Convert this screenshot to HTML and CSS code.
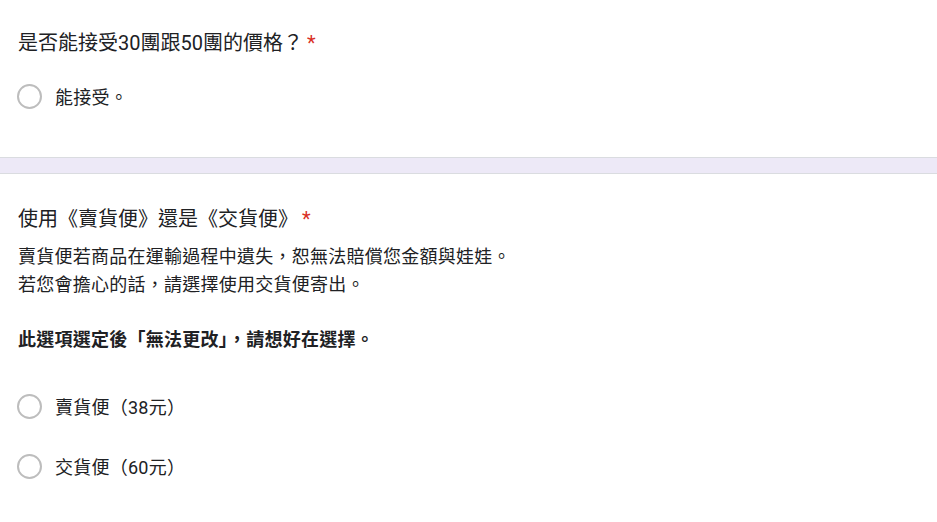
FILE: index.html
```html
<!DOCTYPE html>
<html lang="zh-Hant">
<head>
    <meta charset="UTF-8">
    <meta name="viewport" content="width=device-width, initial-scale=1.0">
    <title>表單</title>
    <link rel="stylesheet" href="styles.css">
</head>
<body>
    <div class="form">
        <!-- Soru 1 -->
        <div class="card card-top">
            <div class="q-title">是否能接受30團跟50團的價格？<span class="req">*</span></div>
            <div class="options">
                <label class="option">
                    <span class="radio"></span>
                    <span class="opt-text">能接受。</span>
                </label>
            </div>
        </div>

        <div class="gap"></div>

        <!-- Soru 2 -->
        <div class="card">
            <div class="q-title">使用《賣貨便》還是《交貨便》<span class="req">*</span></div>
            <div class="q-desc">賣貨便若商品在運輸過程中遺失，恕無法賠償您金額與娃娃。<br>若您會擔心的話，請選擇使用交貨便寄出。<br><br><b>此選項選定後「無法更改」，請想好在選擇。</b></div>
            <div class="options options-spaced">
                <label class="option">
                    <span class="radio"></span>
                    <span class="opt-text">賣貨便（38元）</span>
                </label>
                <label class="option">
                    <span class="radio"></span>
                    <span class="opt-text">交貨便（60元）</span>
                </label>
            </div>
        </div>
    </div>
</body>
</html>
```

FILE: styles.css
```css
* {
    margin: 0;
    padding: 0;
    box-sizing: border-box;
}

body {
    font-family: Roboto, "Noto Sans CJK SC", sans-serif;
    background: #ffffff;
    color: #202124;
    overflow: hidden;
}

.card {
    background: white;
    padding: 30px 0 30px 18px;
    border-top: 1px solid #dadce0;
    border-bottom: 1px solid #dadce0;
}

.card-top {
    border-top: none;
    padding-top: 28px;
    padding-bottom: 31px;
}

.gap {
    height: 15px;
    background: #ede9f7;
}

.q-title {
    font-size: 20px;
    line-height: 30px;
}

.req {
    color: #d93025;
    padding-left: 4px;
}

.q-desc {
    margin-top: 9px;
    font-size: 18px;
    letter-spacing: 0.25px;
    line-height: 27.5px;
}

.q-desc b {
    font-weight: 700;
}

.options {
    margin-top: 8px;
}

.options-spaced {
    margin-top: 23px;
}

.option {
    display: flex;
    align-items: center;
    height: 60px;
    cursor: pointer;
}

.radio {
    width: 25px;
    height: 25px;
    border: 2.5px solid #bdbdbd;
    border-radius: 50%;
    flex-shrink: 0;
    margin-left: -1px;
}

.opt-text {
    margin-left: 13px;
    font-size: 18px;
    letter-spacing: 0.25px;
}
```
